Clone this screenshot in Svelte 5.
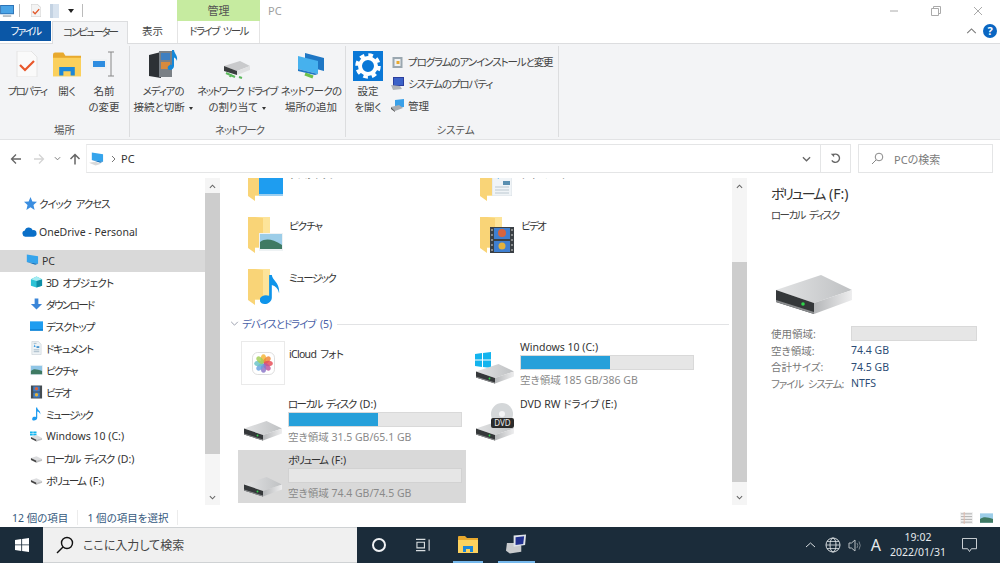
<script>
	const navItems = [
		{ icon: 'cube', label: '3D オブジェクト', fit: 't1' },
		{ icon: 'down', label: 'ダウンロード', fit: 't3' },
		{ icon: 'desktop', label: 'デスクトップ', fit: 't2' },
		{ icon: 'doc', label: 'ドキュメント', fit: 't2' },
		{ icon: 'pic', label: 'ピクチャ', fit: 't3' },
		{ icon: 'film', label: 'ビデオ', fit: 't3' },
		{ icon: 'note', label: 'ミュージック', fit: 't3' },
		{ icon: 'win', label: 'Windows 10 (C:)', fit: '' },
		{ icon: 'drive', label: 'ローカル ディスク ', letter: '(D:)', fit: 't3' },
		{ icon: 'drive', label: 'ボリューム ', letter: '(F:)', fit: 't3' }
	];
	const folders = [
		{ icon: 'desktop', label: 'デスクトップ', fit: 't2' },
		{ icon: 'doc', label: 'ドキュメント', fit: 't2' },
		{ icon: 'pic', label: 'ピクチャ', fit: 't2' },
		{ icon: 'film', label: 'ビデオ', fit: 't3' },
		{ icon: 'note', label: 'ミュージック', fit: 't3' }
	];
	const petals = ['#f6b73c', '#f08a3c', '#e8505b', '#c1569f', '#8d79c9', '#6aa3e0', '#6cc4c8', '#a5cf5a'];
	const details = [
		['空き領域:', '74.4 GB', ''],
		['合計サイズ:', '74.5 GB', ''],
		['ファイル システム:', 'NTFS', 't2']
	];
</script>

{#snippet glyph(name)}
	{#if name === 'cube'}
		<svg viewBox="0 0 14 14"><path d="M1 4l6-3 6 3v7l-6 2-6-2z" fill="#2cc3d6" /><path d="M7 5l6-1v7l-6 2z" fill="#0e8ea6" /><path d="M1 4l6-3 6 3-6 2z" fill="#a5ecf2" /></svg>
	{:else if name === 'down'}
		<svg viewBox="0 0 14 14"><path d="M5 1h4v6h4l-6 6-6-6h4z" fill="#3b86d8" /></svg>
	{:else if name === 'desktop'}
		<svg viewBox="0 0 14 14"><rect y="2" width="14" height="10" fill="#1e9df0" /><rect y="10.5" width="14" height="1.5" fill="#0d7fcf" /></svg>
	{:else if name === 'doc'}
		<svg viewBox="0 0 14 14"><path d="M2 0h7l3 3v11H2z" fill="#eef3f6" stroke="#c3cdd4" stroke-width=".6" /><path d="M4 2h3M4 9h6M4 11h6" stroke="#9fb4c4" /><rect x="7" y="5" width="3" height="2" fill="#4c97d0" /><path d="M4 6l1-3 1 3z" fill="#3aa0e8" /></svg>
	{:else if name === 'pic'}
		<svg viewBox="0 0 14 14"><rect y="1.5" width="14" height="11" fill="#eef2f4" /><rect x="1" y="2.5" width="12" height="9" fill="#8fc5e6" /><path d="M1 8c3-3 6-2 12 0v3.500H1z" fill="#3f7a63" /></svg>
	{:else if name === 'film'}
		<svg viewBox="0 0 14 14"><rect x="1" width="12" height="14" fill="#444c52" /><rect x="3.500" y="1" width="7" height="5.500" fill="#3d7fc9" /><rect x="3.500" y="7.500" width="7" height="5.500" fill="#3d7fc9" /><circle cx="7" cy="3.500" r="1.800" fill="#d8643c" /><circle cx="7" cy="10" r="1.800" fill="#e3b23c" /></svg>
	{:else if name === 'note'}
		<svg viewBox="0 0 14 14"><path d="M6.500 0h1.200c.3 3 4.300 3.500 3.300 7.500-.3-2-1.600-3-3.200-3.300V11c0 2-1.800 3-3.500 3S2 13 2.500 11.500 5 9.800 6.500 10.300z" fill="#1d9bf0" /></svg>
	{:else if name === 'win'}
		<svg viewBox="0 0 14 11"><path d="M0 0h3v2H0zM3.500 0H7v2H3.500zM0 2.500h3v2H0zM3.500 2.500H7v2H3.500z" fill="#14b4ee" /><path d="M1 6l6-2 6 3-6 2z" fill="#dcdddf" /><path d="M1 6l6 3v2L1 8z" fill="#444" /><path d="M7 9l6-2v2l-6 2z" fill="#bfc0c2" /></svg>
	{:else if name === 'drive'}
		<svg viewBox="0 0 14 8"><path d="M1 3l6-2 6 3-6 2z" fill="#dcdddf" /><path d="M1 3l6 3v2L1 5z" fill="#444" /><path d="M7 6l6-2v2L7 8z" fill="#bfc0c2" /></svg>
	{/if}
{/snippet}

{#snippet folderIcon(over)}
	<span class="folder">
		<svg viewBox="0 0 38 38" class="folder-base">
			<path d="M7 0h15v31H7z" fill="#fde49a" />
			<path d="M0 0h7l8 1v29l-8 0v6l-7-5z" fill="#f9d477" />
		</svg>
		{#if over === 'desktop'}
			<svg viewBox="0 0 24 18" class="over over-desktop"><rect width="24" height="18" fill="#1e9df0" /><rect y="16" width="24" height="2" fill="#9ccff0" /></svg>
		{:else if over === 'doc'}
			<svg viewBox="0 0 20 24" class="over over-doc"><path d="M0 0h14l6 5v19H0z" fill="#f0f4f7" stroke="#d0d8de" stroke-width=".6" /><path d="M2 4l3-4 2 7z" fill="#3aa0e8" /><rect x="11" y="9" width="7" height="4" fill="#5a8fb0" /><path d="M3 15h14M3 18h14M3 21h14" stroke="#bcc8d0" /></svg>
		{:else if over === 'pic'}
			<svg viewBox="0 0 24 18" class="over over-pic"><rect width="24" height="18" fill="#eef2f4" /><rect x="1" y="1" width="22" height="15" fill="#9ccde8" /><path d="M1 9c6-4 12-3 22 3v4H1z" fill="#3f7a63" /></svg>
		{:else if over === 'film'}
			<svg viewBox="0 0 24 26" class="over over-film"><rect width="24" height="26" fill="#3a4045" /><rect x="4" y="1" width="16" height="11" fill="#3f7fd0" /><rect x="4" y="14" width="16" height="11" fill="#3f7fd0" /><circle cx="12" cy="6" r="4" fill="#d8643c" /><circle cx="12" cy="19" r="3.500" fill="#e3b23c" /><path d="M1 3h2M1 8h2M1 13h2M1 18h2M1 23h2M21 3h2M21 8h2M21 13h2M21 18h2M21 23h2" stroke="#d8d8d8" /></svg>
		{:else if over === 'note'}
			<svg viewBox="0 0 22 32" class="over over-note"><path d="M10 0h3c.5 6 9 8 8 20-1-5-4-8-8-9v14c0 4-4 7-8 7s-6-3-5-6 6-5 10-3z" fill="#0f94ea" /></svg>
		{/if}
	</span>
{/snippet}

{#snippet driveIcon(cls)}
	<svg viewBox="0 0 76 40" class={cls}>
		<defs>
			<linearGradient id="driveSide" x1="0" x2="1" y1="0" y2="0"><stop offset="0" stop-color="#b4b6b8" /><stop offset="1" stop-color="#eeeeef" /></linearGradient>
			<linearGradient id="driveTop" x1="0" x2="1" y1="0" y2="0"><stop offset="0" stop-color="#e2e3e4" /><stop offset="1" stop-color="#bfc1c3" /></linearGradient>
		</defs>
		<path d="M0 15L45 0l31 15-38 13z" fill="url(#driveTop)" />
		<path d="M38 28l38-13v10L38 39z" fill="url(#driveSide)" />
		<path d="M0 15l38 13v11L0 27z" fill="#35383a" />
		<path d="M0 25l38 12v2L0 27z" fill="#8a8c8e" />
		<circle cx="27" cy="29" r="1.800" fill="#2fd64a" />
	</svg>
{/snippet}

{#snippet smallPc()}
	<svg viewBox="0 0 16 14" class="pc-small">
		<path d="M3 0l12 2v8L3 8z" fill="#35a4ec" />
		<path d="M3 8l12 2-3 1z" fill="#0d70bd" />
		<path d="M0 11l7-1 6 2-6 2z" fill="#d8d9da" />
	</svg>
{/snippet}

<div class="window">
	<div class="titlebar">
		<svg viewBox="0 0 16 13" class="qa-pc"><rect width="15" height="10" fill="#2a6fb3" /><rect x="1" y="1" width="13" height="8" fill="#4aa4e6" /><rect x="3" y="11" width="9" height="2" fill="#b8c0c6" /></svg>
		<span class="qa-sep"></span>
		<svg viewBox="0 0 11 14" class="qa-doc"><path d="M0 0h7l4 4v10H0z" fill="#f4f4f4" stroke="#cfcfcf" /><path d="M2 8l2.500 2.500L9 5.500" fill="none" stroke="#e2582a" stroke-width="1.500" /></svg>
		<svg viewBox="0 0 9 14" class="qa-folder"><path d="M0 0h9v14H0z" fill="#d8e3ef" /><path d="M0 0h3v14H0z" fill="#c3d2e2" /></svg>
		<span class="qa-drop"></span>
		<span class="qa-sep second"></span>
		<div class="manage-head">管理</div>
		<span class="title">PC</span>
		<div class="win-btns">
			<svg viewBox="0 0 10 10"><path d="M1 5h8" stroke="#aaa" /></svg>
			<svg viewBox="0 0 10 10"><path d="M.5 2.500h7v7h-7zM2.500 2.500v-2h7v7h-2" fill="none" stroke="#aaa" /></svg>
			<svg viewBox="0 0 10 10"><path d="M1 1l8 8M9 1l-8 8" stroke="#aaa" /></svg>
		</div>
	</div>

	<div class="tabs">
		<div class="tab file t3">ファイル</div>
		<div class="tab active t4">コンピューター</div>
		<div class="tab view">表示</div>
		<div class="tab drive-tools t3">ドライブ ツール</div>
		<div class="tab-right">
			<svg viewBox="0 0 12 7" class="collapse"><path d="M1 6l5-5 5 5" fill="none" stroke="#777" stroke-width="1.200" /></svg>
			<span class="help">?</span>
		</div>
	</div>

	<div class="ribbon">
		<section class="group places">
			<div class="btns">
				<div class="big w54">
					<svg viewBox="0 0 22 26" class="ic"><path d="M1 0h14l6 6v20H1z" fill="#fafafa" stroke="#e4e4e4" /><path d="M4 14l5 5 9-9" fill="none" stroke="#e8572a" stroke-width="2.200" /></svg>
					<span class="t3">プロパティ</span>
				</div>
				<div class="big w26">
					<svg viewBox="0 0 27 24" class="ic wide"><path d="M0 3q0-2 2-2h8l2 3h15v19H0z" fill="#e8a92e" /><path d="M0 6h27v18H0z" fill="#fbd05c" /><path d="M6 23v-8h15v8h-4v-4h-7v4z" fill="#1c87d8" /></svg>
					<span>開く</span>
				</div>
				<div class="big w48">
					<svg viewBox="0 0 28 26" class="ic wide"><rect y="8" width="17" height="10" fill="#eef1f3" /><rect x="3" y="10" width="12" height="6" fill="#2e8de0" /><path d="M18 1h6M21 1v24M18 25h6" stroke="#888" fill="none" /></svg>
					<span>名前<br />の変更</span>
				</div>
			</div>
			<div class="group-label">場所</div>
		</section>

		<section class="group network">
			<div class="btns">
				<div class="big w58">
					<svg viewBox="0 0 30 30" class="ic media"><path d="M1 5l12-3v26L1 26z" fill="#2d3135" /><rect x="11" y="1" width="13" height="26" fill="#7a8086" /><rect x="13" y="3" width="9" height="7" fill="#3f7fc0" /><rect x="13" y="12" width="9" height="7" fill="#d88a3c" /><path d="M24 0h2c.4 4 4 5 3 11-.6-2-1.600-3-3-3.500V16c0 2-2 4-4 4s-3-2-2-3.500 3-2 4-1.500z" fill="#1487d8" /></svg>
					<span><b class="t2">メディアの</b><br />接続と切断 <i class="caret"></i></span>
				</div>
				<div class="big w90">
					<svg viewBox="0 0 28 26" class="ic netdrive"><path d="M1 13l16-5 10 5-13 5z" fill="#c9cacc" /><path d="M1 13l13 5v4L1 18z" fill="#3a3d3f" /><path d="M14 18l13-5v4l-13 5z" fill="#e0e1e2" /><path d="M3 20l9 4M8 21l-1 3M16 24l3 1" stroke="#5cb85c" stroke-width="2" /></svg>
					<span><b class="t3">ネットワーク ドライブ</b><br />の割り当て <i class="caret"></i></span>
				</div>
				<div class="big w58">
					<svg viewBox="0 0 28 28" class="ic netadd"><path d="M8 1l19 5v13L8 14z" fill="#1f77c4" /><path d="M1 4l20 5v13L1 17z" fill="#46b1ee" /><path d="M1 17l20 5-3 1-17-4z" fill="#1f77c4" /><path d="M8 22l8 3" stroke="#6cc04a" stroke-width="3" /></svg>
					<span><b class="t1">ネットワークの</b><br />場所の追加</span>
				</div>
			</div>
			<div class="group-label t2">ネットワーク</div>
		</section>

		<section class="group system">
			<div class="btns">
				<div class="big w30">
					<svg viewBox="0 0 30 30" class="ic gear"><rect width="30" height="30" fill="#0a78d7" /><circle cx="15" cy="15" r="8" fill="none" stroke="#fff" stroke-width="4" /><circle cx="15" cy="15" r="11" fill="none" stroke="#fff" stroke-width="3.500" stroke-dasharray="4.640 4" /></svg>
					<span>設定<br />を開く</span>
				</div>
				<div class="sys-list">
					<div class="sys-item">
						<svg viewBox="0 0 12 13"><rect x="1" y="2" width="10" height="11" fill="#9aa7b0" /><rect x="3" y="4" width="6" height="7" fill="#eef1f3" /><rect x="5" y="6" width="3" height="3" fill="#e8a92e" /></svg>
						<span class="t2">プログラムのアンインストールと変更</span>
					</div>
					<div class="sys-item">
						<svg viewBox="0 0 13 13"><rect x="2" y="0" width="11" height="9" fill="#2b3e9e" /><rect x="3" y="1" width="9" height="7" fill="#3c62c8" /><path d="M0 8l9 1 2 3-9 1z" fill="#b0b4b8" /></svg>
						<span class="t2">システムのプロパティ</span>
					</div>
					<div class="sys-item">
						<svg viewBox="0 0 13 13"><path d="M4 1l9-1v8l-9 1z" fill="#3aa0e8" /><path d="M0 8l8-2 4 3-8 3z" fill="#a8acb0" /><path d="M0 8l4 4v1L0 10z" fill="#555" /></svg>
						<span>管理</span>
					</div>
				</div>
			</div>
			<div class="group-label">システム</div>
		</section>
	</div>

	<div class="addressbar">
		<div class="nav-arrows">
			<svg viewBox="0 0 12 12" class="arrow"><path d="M11 6H1.500M6 1.500L1.500 6 6 10.500" fill="none" stroke="#666" stroke-width="1.300" /></svg>
			<svg viewBox="0 0 12 12" class="arrow"><path d="M1 6h9.500M6 1.500L10.500 6 6 10.500" fill="none" stroke="#d4d4d4" stroke-width="1.300" /></svg>
			<svg viewBox="0 0 8 5" class="recent"><path d="M1 1l3 3 3-3" fill="none" stroke="#777" stroke-width="1.100" /></svg>
			<svg viewBox="0 0 12 12" class="arrow"><path d="M6 11.500V1.500M1.500 6L6 1.500 10.500 6" fill="none" stroke="#666" stroke-width="1.500" /></svg>
		</div>
		<div class="path-box">
			{@render smallPc()}
			<svg viewBox="0 0 5 8" class="crumb"><path d="M1 1l3 3-3 3" fill="none" stroke="#777" /></svg>
			<span class="path-text">PC</span>
			<svg viewBox="0 0 10 6" class="path-drop"><path d="M1 1l4 4 4-4" fill="none" stroke="#666" stroke-width="1.400" /></svg>
			<span class="refresh">
				<svg viewBox="0 0 12 12"><path d="M3 2.200A4.500 4.500 0 1 1 2 8" fill="none" stroke="#666" stroke-width="1.500" /><path d="M.8 .8h3.700v3.700z" fill="#666" /></svg>
			</span>
		</div>
		<div class="search-box">
			<svg viewBox="0 0 13 13"><circle cx="8" cy="5" r="3.800" fill="none" stroke="#888" /><path d="M5 8l-4 4" stroke="#888" /></svg>
			<span>PCの検索</span>
		</div>
	</div>

	<div class="main">
		<nav class="sidebar">
			<ul class="tree">
				<li class="root quick">
					<svg viewBox="0 0 14 14"><path d="M7 0l2 4.800 5 .4-3.800 3.300L11.400 14 7 11l-4.400 3 1.200-5.500L0 5.200l5-.4z" fill="#3b8ee0" /></svg>
					<span class="t2">クイック アクセス</span>
				</li>
				<li class="root cloud">
					<svg viewBox="0 0 16 10"><path d="M3.500 10A3.300 3.300 0 0 1 3 3.500 4.500 4.500 0 0 1 11.500 3 3.500 3.500 0 0 1 12.500 10z" fill="#0a6fc8" /></svg>
					OneDrive - Personal
				</li>
				<li class="root selected">{@render smallPc()} PC</li>
				{#each navItems as item}
					<li class="child"><span class="nav-ic {item.icon}">{@render glyph(item.icon)}</span><span class={item.fit}>{item.label}{#if item.letter}<u>{item.letter}</u>{/if}</span></li>
				{/each}
			</ul>
			<div class="scrollbar nav-scroll">
				<svg viewBox="0 0 8 5" class="sb-arrow"><path d="M1 4l3-3 3 3" fill="none" stroke="#666" stroke-width="1.200" /></svg>
				<div class="thumb"></div>
				<svg viewBox="0 0 8 5" class="sb-arrow bottom"><path d="M1 1l3 3 3-3" fill="none" stroke="#666" stroke-width="1.200" /></svg>
			</div>
		</nav>

		<div class="content">
			<div class="folder-grid">
				{#each folders as f}
					<div class="folder-item">
						{@render folderIcon(f.icon)}
						<span class="name {f.fit}">{f.label}</span>
					</div>
				{/each}
			</div>
			<div class="group-head">
				<svg viewBox="0 0 10 6"><path d="M1 1l4 4 4-4" fill="none" stroke="#8a8fa0" /></svg>
				<span class="t2">デバイスとドライブ <u>(5)</u></span>
				<i></i>
			</div>
			<div class="drive-grid">
				<div class="drive-item icloud">
					<span class="photos-tile">
						<svg viewBox="0 0 24 24">
							<rect x=".5" y=".5" width="23" height="23" rx="5.500" fill="#fff" stroke="#ddd" />
							{#each petals as c, i}
								<ellipse cx="12" cy="7" rx="2.800" ry="4.700" fill={c} opacity=".85" transform="rotate({i * 45} 12 12)" />
							{/each}
						</svg>
					</span>
					<span class="name t1">iCloud フォト</span>
				</div>
				<div class="drive-item">
					<span class="drive-slot">
						<svg viewBox="0 0 16 16" class="winlogo"><path d="M0 2l7-1v6.500H0zM8 1l8-1v7.500H8zM0 8.500h7V15l-7-1zM8 8.500h8V16l-8-1z" fill="#14b4ee" /></svg>
						{@render driveIcon('drive-md')}
					</span>
					<div class="drive-info">
						<span class="name">Windows 10 (C:)</span>
						<div class="bar"><div class="fill" style="width: 52%"></div></div>
						<span class="free">空き領域 185 GB/386 GB</span>
					</div>
				</div>
				<div class="drive-item">
					<span class="drive-slot">{@render driveIcon('drive-md')}</span>
					<div class="drive-info">
						<span class="name t3">ローカル ディスク <u>(D:)</u></span>
						<div class="bar"><div class="fill" style="width: 52%"></div></div>
						<span class="free">空き領域 31.5 GB/65.1 GB</span>
					</div>
				</div>
				<div class="drive-item">
					<span class="drive-slot">
						<svg viewBox="0 0 22 24" class="disc"><circle cx="11" cy="11" r="11" fill="#d4d7d9" /><circle cx="11" cy="11" r="3" fill="#f4f5f6" /></svg>
						{@render driveIcon('drive-md')}
						<span class="dvd-tag">DVD</span>
					</span>
					<div class="drive-info">
						<span class="name">DVD RW ドライブ (E:)</span>
					</div>
				</div>
				<div class="drive-item selected">
					<span class="drive-slot">{@render driveIcon('drive-md')}</span>
					<div class="drive-info">
						<span class="name t3">ボリューム <u>(F:)</u></span>
						<div class="bar"></div>
						<span class="free">空き領域 74.4 GB/74.5 GB</span>
					</div>
				</div>
			</div>
		</div>

		<div class="scrollbar content-scroll">
			<svg viewBox="0 0 8 5" class="sb-arrow"><path d="M1 4l3-3 3 3" fill="none" stroke="#666" stroke-width="1.200" /></svg>
			<div class="thumb"></div>
			<svg viewBox="0 0 8 5" class="sb-arrow bottom"><path d="M1 1l3 3 3-3" fill="none" stroke="#666" stroke-width="1.200" /></svg>
		</div>

		<aside class="details">
			<h2 class="t4">ボリューム <u>(F:)</u></h2>
			<p class="kind t3">ローカル ディスク</p>
			{@render driveIcon('drive-lg')}
			<dl>
				<dt>使用領域:</dt>
				<dd><div class="bar"></div></dd>
				{#each details as [k, v, fit]}
					<dt class={fit}>{k}</dt>
					<dd>{v}</dd>
				{/each}
			</dl>
		</aside>
	</div>

	<div class="statusbar">
		<span class="count">12 個の項目</span>
		<span class="count">1 個の項目を選択</span>
		<div class="view-btns">
			<svg viewBox="0 0 14 13"><rect width="14" height="13" fill="#f2f2f2" /><path d="M1 2h12M1 5h12M1 8h12M1 11h12" stroke="#aaa" /><path d="M4.500 0v13" stroke="#e5b8a8" /></svg>
			<svg viewBox="0 0 14 10"><rect width="14" height="10" fill="#9ccde8" /><path d="M0 6c4-3 8-2 14 0v4H0z" fill="#3f7a63" /></svg>
		</div>
	</div>

	<div class="taskbar">
		<div class="start">
			<svg viewBox="0 0 13 13"><path d="M0 1.800L5.800 1v5H0zM6.600 .9L13 0v6H6.600zM0 6.800h5.800v5.200L0 11.200zM6.600 6.800H13V13l-6.400-.9z" fill="#fff" /></svg>
		</div>
		<div class="tb-search">
			<svg viewBox="0 0 18 18"><circle cx="11" cy="7" r="5.500" fill="none" stroke="#111" stroke-width="1.400" /><path d="M7 11l-6 6" stroke="#111" stroke-width="1.500" /></svg>
			<span>ここに入力して検索</span>
		</div>
		<span class="cortana"></span>
		<svg viewBox="0 0 16 14" class="taskview"><path d="M0 1h10M0 13h10M1 4h8v6H1zM14 1v12" fill="none" stroke="#d8dde0" stroke-width="1.200" /></svg>
		<div class="tb-app folder-app">
			<svg viewBox="0 0 20 18"><path d="M0 2q0-1 1-1h6l2 2h11v15H0z" fill="#e8a92e" /><path d="M0 5h20v13H0z" fill="#fcd25e" /><path d="M5 17v-6h10v6h-3v-3H8v3z" fill="#1c87d8" /></svg>
		</div>
		<div class="tb-app remote-app">
			<svg viewBox="0 0 22 20"><path d="M1 9h12l3 3v6l-12 2-4-3z" fill="#c8cacc" /><path d="M8 1l13-1-1 11-12 2z" fill="#dfe3e8" /><path d="M10 3l9-1-1 8-8 1z" fill="#22318f" /></svg>
		</div>
		<div class="tray">
			<svg viewBox="0 0 11 6" class="t-up"><path d="M1 5l4.500-4L10 5" fill="none" stroke="#d8dde0" /></svg>
			<svg viewBox="0 0 16 16" class="t-globe"><circle cx="8" cy="8" r="7" fill="none" stroke="#d8dde0" /><ellipse cx="8" cy="8" rx="3" ry="7" fill="none" stroke="#d8dde0" /><path d="M1 8h14M2 4.500h12M2 11.500h12" stroke="#d8dde0" stroke-width=".8" /></svg>
			<svg viewBox="0 0 15 13" class="t-sound"><path d="M1 4h2.500L7 1v11L3.500 9H1z" fill="none" stroke="#b8bec2" /><path d="M9 4q1.500 2.500 0 5M11 2.500q2.500 4 0 8" fill="none" stroke="#77828a" /></svg>
			<span class="ime">A</span>
			<div class="clock"><span>19:02</span><span>2022/01/31</span></div>
			<svg viewBox="0 0 16 15" class="t-notify"><path d="M.5.500h15v11H10l-2 3-2-3H.5z" fill="none" stroke="#d8dde0" /></svg>
		</div>
	</div>
</div>

<style>
	:global(body) {
		margin: 0;
		background: #fff;
	}
	.window {
		width: 1000px;
		height: 563px;
		overflow: hidden;
		display: flex;
		flex-direction: column;
		font-family: 'Noto Sans', 'Noto Sans CJK JP', sans-serif;
		font-size: 10.5px;
		font-feature-settings: 'palt';
		color: #333;
		background: #fff;
	}
	svg {
		display: block;
		flex: none;
	}
	b {
		font-weight: 400;
	}
	/* latin tail of a tightened label keeps normal spacing */
	u {
		text-decoration: none;
		letter-spacing: 0;
	}

	/* kana in the reference's UI font runs narrower than in Noto */
	.t1 { letter-spacing: -0.7px; word-spacing: 2px; }
	.t2 { letter-spacing: -1.1px; word-spacing: 3px; }
	.t3 { letter-spacing: -1.6px; word-spacing: 3px; }
	.t4 { letter-spacing: -2px; word-spacing: 3px; }

	/* title bar */
	.titlebar {
		height: 21px;
		flex: none;
		display: flex;
		align-items: center;
	}
	.qa-pc {
		width: 15px;
		height: 12px;
		margin-top: 1px;
	}
	.qa-sep {
		width: 1px;
		height: 13px;
		background: #bbb;
		margin-left: 4px;
	}
	.qa-sep.second {
		margin-left: 8px;
	}
	.qa-doc {
		width: 10px;
		height: 13px;
		margin-left: 11px;
	}
	.qa-folder {
		width: 9px;
		height: 14px;
		margin-left: 9px;
	}
	.qa-drop {
		width: 0;
		height: 0;
		border: 3px solid transparent;
		border-top: 4px solid #222;
		border-bottom: 0;
		margin-left: 9px;
	}
	.manage-head {
		margin-left: 94px;
		width: 83px;
		height: 21px;
		line-height: 21px;
		text-align: center;
		background: #c6eba0;
		color: #555;
		font-size: 11px;
	}
	.title {
		margin-left: 8px;
		color: #a0a0a0;
		font-size: 11px;
	}
	.win-btns {
		margin-left: auto;
		display: flex;
		gap: 32px;
		padding-right: 17px;
	}
	.win-btns svg {
		width: 10px;
		height: 10px;
	}

	/* tabs */
	.tabs {
		height: 23px;
		flex: none;
		display: flex;
		position: relative;
		border-bottom: 1px solid #dcdddf;
		box-sizing: border-box;
	}
	.tab {
		font-size: 10.5px;
		text-align: center;
		color: #444;
		line-height: 21px;
	}
	.file {
		width: 51px;
		height: 20px;
		background: #0b57a6;
		color: #fff;
		line-height: 20px;
	}
	.active {
		margin-left: 1px;
		width: 76px;
		height: 23px;
		background: #f3f4f6;
		border: 1px solid #dcdddf;
		border-bottom: 0;
		box-sizing: border-box;
	}
	.view {
		width: 49px;
	}
	.drive-tools {
		width: 83px;
		height: 22px;
		border: 1px solid #e4e4e4;
		border-width: 0 1px;
		box-sizing: border-box;
	}
	.tab-right {
		margin-left: auto;
		display: flex;
		align-items: center;
		gap: 6px;
		padding: 0 3px 2px 0;
	}
	.collapse {
		width: 11px;
		height: 6px;
	}
	.help {
		width: 14px;
		height: 14px;
		border-radius: 50%;
		background: #0a66c2;
		color: #fff;
		font-weight: 700;
		font-size: 11px;
		line-height: 14px;
		text-align: center;
	}

	/* ribbon */
	.ribbon {
		height: 96px;
		flex: none;
		display: flex;
		background: #f3f4f6;
		border-bottom: 1px solid #e2e3e5;
		box-sizing: border-box;
	}
	.group {
		display: flex;
		flex-direction: column;
		height: 91px;
		margin-top: 2px;
		border-right: 1px solid #dcdddf;
	}
	.places {
		width: 129px;
	}
	.network {
		width: 216px;
		padding-left: 4px;
		box-sizing: border-box;
	}
	.system {
		width: 213px;
		padding-left: 7px;
		box-sizing: border-box;
	}
	.btns {
		display: flex;
		height: 79px;
	}
	.group-label {
		text-align: center;
		color: #555;
		line-height: 14px;
	}
	.big {
		display: flex;
		flex-direction: column;
		align-items: center;
		text-align: center;
		color: #444;
		line-height: 16px;
		white-space: nowrap;
	}
	.w54 { width: 54px; }
	.w26 { width: 26px; }
	.w48 { width: 48px; }
	.w58 { width: 58px; }
	.w90 { width: 90px; }
	.w30 { width: 30px; }
	.ic {
		width: 22px;
		height: 26px;
		margin: 5px 0 6px;
	}
	.ic.wide {
		width: 28px;
	}
	.ic.media {
		width: 30px;
		height: 30px;
		margin: 4px 0 3px;
	}
	.ic.netdrive {
		width: 28px;
		height: 26px;
		margin: 7px 0 4px;
	}
	.ic.netadd {
		width: 28px;
		height: 28px;
		margin: 6px 0 3px;
	}
	.ic.gear {
		width: 30px;
		height: 30px;
		margin: 5px 0 2px;
	}
	.caret {
		display: inline-block;
		width: 0;
		height: 0;
		border: 2.500px solid transparent;
		border-top: 3px solid #333;
		border-bottom: 0;
		vertical-align: middle;
		margin-left: 1px;
	}
	.sys-list {
		margin-left: 8px;
		padding-top: 7px;
		display: flex;
		flex-direction: column;
		gap: 5px;
	}
	.sys-item {
		display: flex;
		align-items: center;
		gap: 4px;
		height: 17px;
		color: #444;
		white-space: nowrap;
	}
	.sys-item svg {
		width: 13px;
		height: 13px;
	}

	/* address bar */
	.addressbar {
		height: 38px;
		flex: none;
		display: flex;
		align-items: flex-start;
		padding-top: 4px;
		box-sizing: border-box;
	}
	.nav-arrows {
		width: 86px;
		height: 29px;
		display: flex;
		align-items: center;
		padding-left: 10px;
		box-sizing: border-box;
	}
	.arrow {
		width: 12px;
		height: 12px;
		margin-right: 11px;
	}
	.recent {
		width: 7px;
		height: 5px;
		margin: 0 8px 0 -2px;
	}
	.path-box {
		width: 765px;
		height: 29px;
		display: flex;
		align-items: center;
		border: 1px solid #e4e5e6;
		border-left-color: #eee;
		box-sizing: border-box;
		padding-left: 2px;
		color: #333;
		font-size: 11px;
	}
	.pc-small {
		width: 15px;
		height: 14px;
	}
	.crumb {
		width: 5px;
		height: 8px;
		margin-left: 7px;
	}
	.path-text {
		margin-left: 5px;
	}
	.path-drop {
		width: 9px;
		height: 6px;
		margin-left: auto;
	}
	.refresh {
		width: 29px;
		height: 27px;
		margin-left: 9px;
		border-left: 1px solid #e4e5e6;
		display: flex;
		align-items: center;
		justify-content: center;
	}
	.refresh svg {
		width: 11px;
		height: 11px;
	}
	.search-box {
		margin-left: 7px;
		width: 135px;
		height: 29px;
		display: flex;
		align-items: center;
		gap: 10px;
		padding-left: 12px;
		border: 1px solid #e4e5e6;
		box-sizing: border-box;
		color: #7c7c7c;
		font-size: 11px;
	}
	.search-box svg {
		width: 13px;
		height: 13px;
	}

	/* main */
	.main {
		flex: none;
		height: 330px;
		display: flex;
		box-sizing: border-box;
	}
	.sidebar {
		width: 220px;
		flex: none;
		display: flex;
		height: 327px;
	}
	.tree {
		list-style: none;
		margin: 0;
		padding: 14px 0 0;
		width: 206px;
		color: #333;
	}
	.root {
		display: flex;
		align-items: center;
		height: 22px;
		padding-left: 24px;
		box-sizing: border-box;
		gap: 2px;
	}
	.quick svg {
		width: 13px;
		height: 13px;
	}
	.root.quick {
		margin-bottom: 7px;
	}
	.root.cloud {
		padding-left: 22px;
		gap: 2px;
		margin-bottom: 7px;
	}
	.cloud svg {
		width: 15px;
		height: 10px;
	}
	.root.selected {
		background: #d9d9d9;
		gap: 3px;
		margin-bottom: -1px;
	}
	.child {
		display: flex;
		align-items: center;
		height: 22px;
		padding-left: 30px;
		gap: 3px;
		white-space: pre;
	}
	.nav-ic {
		width: 13px;
		height: 14px;
		display: block;
	}
	.nav-ic :global(svg) {
		width: 13px;
		height: 14px;
	}
	.nav-ic.win :global(svg) {
		height: 11px;
		margin-top: 2px;
	}
	.nav-ic.drive :global(svg) {
		height: 8px;
		margin-top: 4px;
	}
	.scrollbar {
		width: 15px;
		flex: none;
		height: 327px;
		position: relative;
		background: #f5f5f5;
	}
	.sb-arrow {
		position: absolute;
		left: 4px;
		top: 6px;
		width: 7px;
		height: 5px;
	}
	.sb-arrow.bottom {
		top: auto;
		bottom: 5px;
	}
	.thumb {
		position: absolute;
		left: 0;
		right: 0;
		background: #cdcdcd;
	}
	.nav-scroll .thumb {
		top: 15px;
		height: 261px;
	}
	.content-scroll .thumb {
		top: 84px;
		height: 220px;
	}

	/* content */
	.content {
		width: 512px;
		flex: none;
		height: 330px;
		overflow: hidden;
		padding-left: 18px;
		box-sizing: border-box;
	}
	.folder-grid {
		margin-top: -18px;
		display: grid;
		grid-template-columns: 228px 228px;
		grid-auto-rows: 52px;
		column-gap: 4px;
	}
	.folder-item {
		display: flex;
		padding-left: 10px;
		gap: 3px;
		padding-top: 5px;
	}
	.folder {
		position: relative;
		display: block;
		width: 38px;
		height: 38px;
		flex: none;
	}
	.folder-base {
		width: 38px;
		height: 38px;
	}
	.over {
		position: absolute;
	}
	.over-desktop {
		left: 11px;
		top: 13px;
		width: 24px;
		height: 18px;
	}
	.over-doc {
		left: 12px;
		top: 7px;
		width: 20px;
		height: 24px;
	}
	.over-pic {
		left: 11px;
		top: 16px;
		width: 24px;
		height: 18px;
	}
	.over-film {
		left: 10px;
		top: 10px;
		width: 24px;
		height: 26px;
	}
	.over-note {
		left: 12px;
		top: 5px;
		width: 20px;
		height: 31px;
	}
	.folder-item .name {
		margin-top: 2px;
		line-height: 14px;
	}
	.name {
		color: #333;
		font-size: 10.5px;
		line-height: 14px;
		white-space: nowrap;
	}
	.group-head {
		display: flex;
		align-items: center;
		height: 18px;
		margin: -2px 0 0 -8px;
		color: #4a5fa8;
		white-space: nowrap;
	}
	.group-head svg {
		width: 9px;
		height: 5px;
		margin-right: 3px;
	}
	.group-head i {
		flex: none;
		width: 392px;
		height: 1px;
		background: #e2e3e5;
		margin-left: 5px;
		margin-top: 3px;
	}
	.drive-grid {
		margin-top: 5px;
		display: grid;
		grid-template-columns: 228px 228px;
		grid-auto-rows: 53px;
		column-gap: 4px;
		row-gap: 3.5px;
	}
	.drive-item {
		display: flex;
		height: 53px;
		position: relative;
	}
	.drive-item.selected {
		background: #d9d9d9;
	}
	.drive-item.icloud {
		padding: 4px 0 0 3px;
		box-sizing: border-box;
		gap: 4px;
	}
	.photos-tile {
		width: 42px;
		height: 42px;
		border: 1px solid #eaeaea;
		display: flex;
		align-items: center;
		justify-content: center;
		flex: none;
	}
	.photos-tile svg {
		width: 23px;
		height: 23px;
	}
	.icloud .name {
		margin-top: 6px;
	}
	.drive-slot {
		position: relative;
		display: block;
		width: 50px;
		height: 53px;
		flex: none;
	}
	.drive-slot :global(.drive-md) {
		position: absolute;
		left: 6px;
		top: 27px;
		width: 38px;
		height: 20px;
	}
	.winlogo {
		position: absolute;
		left: 5px;
		top: 15px;
		width: 16px;
		height: 16px;
	}
	.disc {
		position: absolute;
		left: 21px;
		top: 9px;
		width: 22px;
		height: 24px;
	}
	.dvd-tag {
		position: absolute;
		left: 21px;
		top: 24px;
		width: 23px;
		height: 10px;
		line-height: 10px;
		background: #2b2b2b;
		border-radius: 2px;
		color: #e8e8e8;
		font-size: 8px;
		text-align: center;
		z-index: 1;
	}
	.drive-info {
		display: flex;
		flex-direction: column;
		padding-top: 3px;
		width: 174px;
	}
	.bar {
		height: 15px;
		margin-top: 1px;
		background: #e6e6e6;
		border: 1px solid #d9d9d9;
		box-sizing: border-box;
	}
	.selected .bar {
		border-color: #d2d2d2;
	}
	.fill {
		height: 100%;
		background: #26a0da;
	}
	.free {
		margin-top: 3px;
		color: #8a8a8a;
		line-height: 14px;
		white-space: nowrap;
	}

	/* details */
	.details {
		flex: 1;
		padding: 6px 0 0 24px;
		min-width: 0;
	}
	.details h2 {
		margin: 0;
		font-size: 14px;
		font-weight: 400;
		line-height: 20px;
		color: #333;
	}
	.kind {
		margin: 4px 0 0;
		color: #444;
		line-height: 14px;
	}
	.details :global(.drive-lg) {
		width: 76px;
		height: 40px;
		margin: 53px 0 0 5px;
	}
	dl {
		margin: 10px 0 0;
		display: grid;
		grid-template-columns: 80px 126px;
		grid-auto-rows: 16.700px;
		align-items: center;
	}
	dt {
		color: #777;
		white-space: nowrap;
	}
	dd {
		margin: 0;
		color: #2b4c75;
	}
	dd .bar {
		margin: 0;
	}

	/* status bar */
	.statusbar {
		height: 19px;
		flex: none;
		display: flex;
		align-items: center;
		padding-left: 12px;
		color: #35597d;
	}
	.count {
		padding-right: 9px;
		margin-right: 9px;
		border-right: 1px solid #ececec;
	}
	.view-btns {
		margin-left: auto;
		display: flex;
		align-items: center;
		gap: 7px;
		padding-right: 7px;
	}
	.view-btns svg {
		width: 13px;
		height: 12px;
	}

	/* taskbar */
	.taskbar {
		height: 36px;
		flex: none;
		display: flex;
		align-items: center;
		background: #1b2c3a;
		color: #e6eaed;
	}
	.start {
		width: 43px;
		display: flex;
		justify-content: center;
	}
	.start svg {
		width: 14px;
		height: 14px;
	}
	.tb-search {
		width: 314px;
		height: 36px;
		background: #f0f0f0;
		border: 1px solid #cfd2d4;
		border-width: 1px 0;
		box-sizing: border-box;
		display: flex;
		align-items: center;
		gap: 9px;
		padding-left: 13px;
		color: #444;
		font-size: 12px;
	}
	.tb-search svg {
		width: 18px;
		height: 18px;
	}
	.cortana {
		width: 14px;
		height: 14px;
		border: 2px solid #f0f2f4;
		border-radius: 50%;
		margin-left: 15px;
		box-sizing: border-box;
	}
	.taskview {
		width: 15px;
		height: 14px;
		margin-left: 30px;
	}
	.tb-app {
		height: 36px;
		display: flex;
		align-items: center;
		justify-content: center;
		box-sizing: border-box;
		border-bottom: 2px solid #76b9ed;
	}
	.folder-app {
		width: 30px;
		margin-left: 22px;
	}
	.folder-app svg {
		width: 20px;
		height: 18px;
	}
	.remote-app {
		width: 37px;
		margin-left: 15px;
	}
	.remote-app svg {
		width: 21px;
		height: 20px;
	}
	.tray {
		margin-left: auto;
		display: flex;
		align-items: center;
		padding-right: 23px;
	}
	.t-up {
		width: 11px;
		height: 6px;
	}
	.t-globe {
		width: 16px;
		height: 16px;
		margin-left: 9px;
	}
	.t-sound {
		width: 15px;
		height: 13px;
		margin-left: 7px;
	}
	.ime {
		margin-left: 8px;
		font-size: 16px;
		line-height: 20px;
	}
	.clock {
		margin-left: 7px;
		width: 60px;
		display: flex;
		flex-direction: column;
		align-items: center;
		font-size: 10.5px;
		line-height: 15px;
	}
	.t-notify {
		width: 15px;
		height: 14px;
		margin-left: 14px;
	}
</style>
